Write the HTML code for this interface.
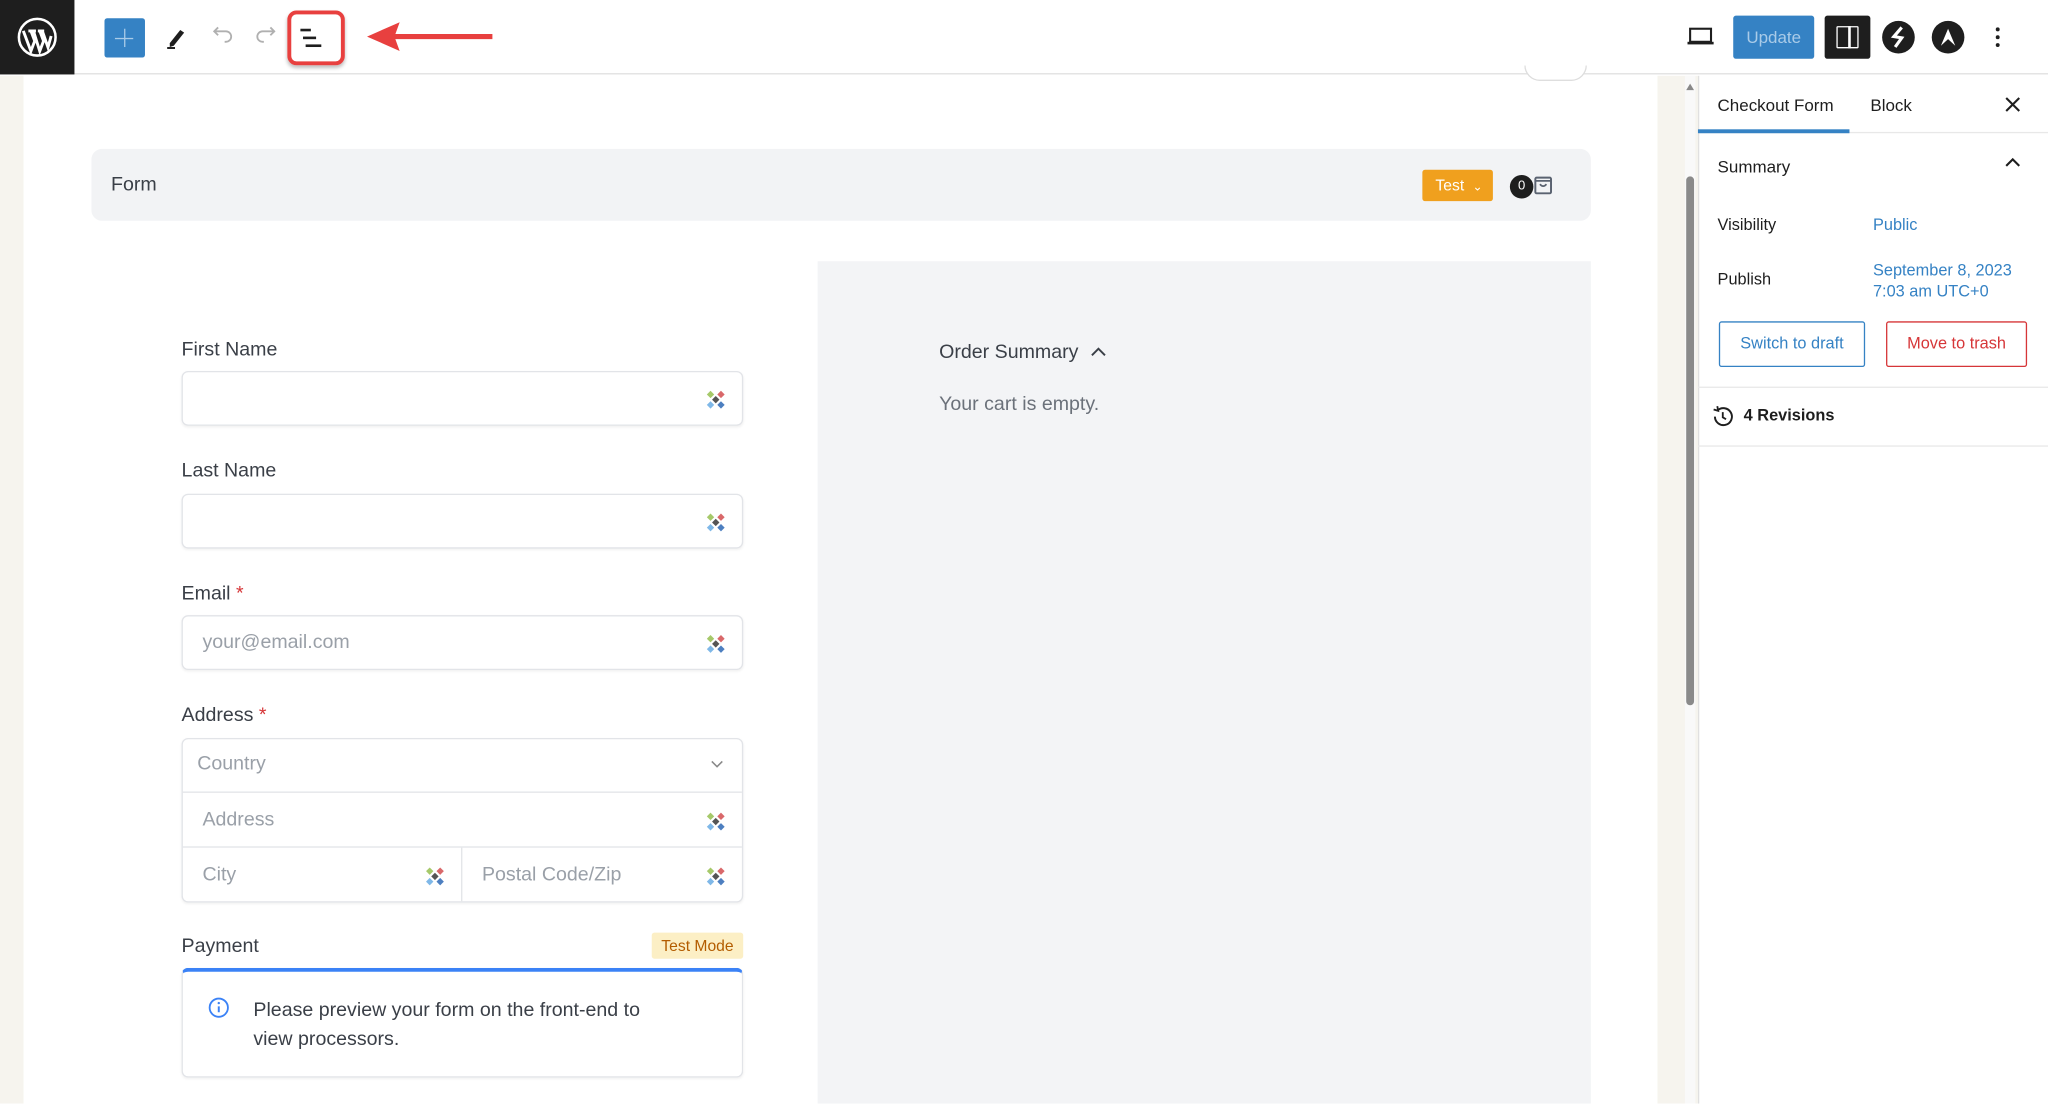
<!DOCTYPE html>
<html><head><meta charset="utf-8"><style>
*{box-sizing:border-box;margin:0;padding:0}
html,body{width:2048px;height:1104px;overflow:hidden;background:#fff;font-family:"Liberation Sans",sans-serif}
#w{position:absolute;left:0;top:0;width:1568px;height:845px;transform:scale(1.30612);transform-origin:0 0;background:#fff;overflow:hidden}
.a{position:absolute}
.lbl{position:absolute;left:139px;font-size:15px;color:#3a3f47}
.req{color:#d63638}
.inp{position:absolute;left:139px;width:430px;height:42px;border:1px solid #e2e4e8;border-radius:5px;background:#fff;box-shadow:0 1px 2px rgba(0,0,0,.06)}
.ph{position:absolute;font-size:15px;color:#9aa0a8}
.gem{position:absolute;width:16px;height:16px}
.gem i{position:absolute;width:4px;height:4px;transform:rotate(45deg)}
.sb{font-size:12.5px;color:#1e1e1e}
</style></head><body><div id="w">
<div class="a" style="left:0;top:0;width:1568px;height:57px;border-bottom:1px solid #e0e0e0;background:#fff"></div>
<div class="a" style="left:0;top:0;width:57px;height:57px;background:#1e1e1e"></div>
<svg class="a" style="left:13px;top:13px" width="31" height="31" viewBox="0 0 32 32"><circle cx="16" cy="16" r="14.5" fill="none" stroke="#fff" stroke-width="2"/><path d="M5 11 L11 27 L14 19 L11 11 M9 11h6 M13 11 L18 27 L21 19 L18 11 M16.5 11h5 M20 11 L24.5 24 L27 15" fill="none" stroke="#fff" stroke-width="2.3"/></svg>
<div class="a" style="left:80px;top:14px;width:31px;height:30px;background:#3582c4;border-radius:2px"></div>
<div class="a" style="left:95px;top:22px;width:1px;height:14px;background:#a9cbe8"></div>
<div class="a" style="left:88px;top:29px;width:14px;height:1px;background:#a9cbe8"></div>
<svg class="a" style="left:126px;top:19px" width="18" height="20" viewBox="0 0 18 20"><path d="M4 14 L12 4 L15 6 L7 16 L4 17Z" fill="#1e1e1e"/><rect x="2" y="17" width="6" height="1.5" fill="#1e1e1e"/></svg>
<svg class="a" style="left:160px;top:19px" width="20" height="18" viewBox="0 0 20 18"><path d="M5 5 H13 A4 4 0 0 1 13 13 H12 M7 2 L4 5 L7 8" fill="none" stroke="#b0b0b0" stroke-width="1.4"/></svg>
<svg class="a" style="left:194px;top:19px" width="20" height="18" viewBox="0 0 20 18"><path d="M15 5 H7 A4 4 0 0 0 7 13 H8 M13 2 L16 5 L13 8" fill="none" stroke="#b0b0b0" stroke-width="1.4"/></svg>
<div class="a" style="left:220px;top:8px;width:44px;height:42px;border:3px solid #e8403f;border-radius:7px;box-shadow:0 2px 3px rgba(0,0,0,.25)"></div>
<div class="a" style="left:230px;top:22px;width:8px;height:1.5px;background:#1e1e1e"></div>
<div class="a" style="left:232px;top:28px;width:10px;height:1.5px;background:#1e1e1e"></div>
<div class="a" style="left:234px;top:34px;width:12px;height:1.5px;background:#1e1e1e"></div>
<svg class="a" style="left:278px;top:14px" width="104" height="30" viewBox="0 0 104 30"><path d="M99 14 H22" stroke="#e8403f" stroke-width="4"/><path d="M3 14 L28 3 L24 14 L28 25Z" fill="#e8403f"/></svg>
<svg class="a" style="left:1291px;top:20px" width="22" height="16" viewBox="0 0 22 16"><rect x="3" y="2" width="16" height="10" fill="none" stroke="#1e1e1e" stroke-width="1.6"/><rect x="1" y="12" width="20" height="2" fill="#1e1e1e"/></svg>
<div class="a" style="left:1327px;top:12px;width:62px;height:33px;background:#3582c4;border-radius:2px;color:#a9cbe8;font-size:13px;line-height:33px;text-align:center">Update</div>
<div class="a" style="left:1397px;top:12px;width:35px;height:33px;background:#1e1e1e;border-radius:2px"></div>
<div class="a" style="left:1406px;top:20px;width:17px;height:17px;border:1.6px solid #fff;border-radius:1px"></div>
<div class="a" style="left:1415px;top:20px;width:1.6px;height:17px;background:#fff"></div>
<div class="a" style="left:1441px;top:16px;width:25px;height:25px;border-radius:50%;background:#1e1e1e"></div>
<svg class="a" style="left:1441px;top:16px" width="25" height="25" viewBox="0 0 25 25"><path d="M15 5 L9 12 L15 13 L10 20" fill="none" stroke="#fff" stroke-width="2.4"/></svg>
<div class="a" style="left:1479px;top:16px;width:25px;height:25px;border-radius:50%;background:#1e1e1e"></div>
<svg class="a" style="left:1479px;top:16px" width="25" height="25" viewBox="0 0 25 25"><path d="M7 19 L12.5 6 L18 19 L12.5 14Z" fill="#fff"/></svg>
<div class="a" style="left:1528px;top:21px;width:3px;height:3px;border-radius:50%;background:#1e1e1e;box-shadow:0 6px 0 #1e1e1e,0 12px 0 #1e1e1e"></div>
<div class="a" style="left:0;top:58px;width:18px;height:787px;background:#f6f4ee"></div>
<div class="a" style="left:1269px;top:58px;width:31px;height:787px;background:#f6f4ee"></div>
<div class="a" style="left:1290px;top:58px;width:8px;height:787px;background:#f9f9f9"></div>
<div class="a" style="left:1291px;top:64px;width:0;height:0;border-left:3px solid transparent;border-right:3px solid transparent;border-bottom:5px solid #888"></div>
<div class="a" style="left:1291px;top:135px;width:6px;height:405px;background:#8a8a8a;border-radius:3px"></div>
<div class="a" style="left:1167px;top:50px;width:48px;height:12px;border:1px solid #ddd;border-top:none;border-radius:0 0 12px 12px;background:#fff"></div>
<div class="a" style="left:70px;top:114px;width:1148px;height:55px;background:#f2f3f5;border-radius:8px"></div>
<div class="a" style="left:85px;top:133px;font-size:15px;color:#3a3f47">Form</div>
<div class="a" style="left:1089px;top:130px;width:54px;height:24px;background:#f0a01e;border-radius:2px;color:#fff;font-size:12px;line-height:24px;padding-left:10px">Test <span style="font-size:9px;margin-left:3px">&#8964;</span></div>
<div class="a" style="left:1156px;top:134px;width:18px;height:18px;border-radius:50%;background:#1e1e1e;color:#fff;font-size:10px;line-height:18px;text-align:center">0</div>
<svg class="a" style="left:1174px;top:133px" width="16" height="17" viewBox="0 0 16 17"><rect x="1.5" y="3" width="12" height="12" rx="1" fill="none" stroke="#5a6270" stroke-width="1.5"/><path d="M1.5 5.5h12 M5 8 Q7.5 11 10 8" fill="none" stroke="#5a6270" stroke-width="1.3"/></svg>
<div class="a" style="left:626px;top:200px;width:592px;height:645px;background:#f3f4f6"></div>
<div class="a" style="left:719px;top:261px;font-size:15px;color:#3a3f47">Order Summary <svg width="14" height="10" viewBox="0 0 14 10" style="margin-left:4px"><path d="M2 8 L7 3 L12 8" fill="none" stroke="#3a3f47" stroke-width="1.5"/></svg></div>
<div class="a" style="left:719px;top:301px;font-size:15px;color:#6b717a">Your cart is empty.</div>
<div class="lbl" style="top:259px">First Name</div>
<div class="inp" style="top:284px"></div>
<div class="lbl" style="top:352px">Last Name</div>
<div class="inp" style="top:378px"></div>
<div class="lbl" style="top:446px">Email <span class="req">*</span></div>
<div class="inp" style="top:471px"></div>
<div class="ph" style="left:155px;top:483px">your@email.com</div>
<div class="lbl" style="top:539px">Address <span class="req">*</span></div>
<div class="inp" style="top:565px;height:126px"></div>
<div class="a" style="left:140px;top:606px;width:428px;height:1px;background:#e2e4e8"></div>
<div class="a" style="left:140px;top:648px;width:428px;height:1px;background:#e2e4e8"></div>
<div class="a" style="left:353px;top:649px;width:1px;height:41px;background:#e2e4e8"></div>
<div class="ph" style="left:151px;top:576px">Country</div>
<svg class="a" style="left:543px;top:580px" width="12" height="10" viewBox="0 0 12 10"><path d="M2 3 L6 7 L10 3" fill="none" stroke="#888" stroke-width="1.2"/></svg>
<div class="ph" style="left:155px;top:619px">Address</div>
<div class="ph" style="left:155px;top:661px">City</div>
<div class="ph" style="left:369px;top:661px">Postal Code/Zip</div>
<div class="lbl" style="top:716px">Payment</div>
<div class="a" style="left:499px;top:714px;width:70px;height:20px;background:#fcefc5;color:#b35c00;font-size:12px;line-height:20px;text-align:center;border-radius:2px">Test Mode</div>
<div class="inp" style="top:741px;height:84px;border-top:3px solid #3b82f6"></div>
<svg class="a" style="left:159px;top:763px" width="17" height="17" viewBox="0 0 17 17"><circle cx="8.5" cy="8.5" r="7" fill="none" stroke="#3b82f6" stroke-width="1.4"/><path d="M8.5 7.5v4.5" stroke="#3b82f6" stroke-width="1.5"/><circle cx="8.5" cy="5" r="0.9" fill="#3b82f6"/></svg>
<div class="a" style="left:194px;top:763px;width:360px;font-size:15px;line-height:22px;color:#3a3f47">Please preview your form on the front-end to<br>view processors.</div>
<div id="gems"></div>
<div class="a" style="left:1300px;top:58px;width:268px;height:787px;background:#fff;border-left:1px solid #e0e0e0"></div>
<div class="a sb" style="left:1315px;top:73px;font-size:13px">Checkout Form</div>
<div class="a sb" style="left:1432px;top:73px;font-size:13px">Block</div>
<svg class="a" style="left:1535px;top:74px" width="12" height="12" viewBox="0 0 12 12"><path d="M1 1L11 11M11 1L1 11" stroke="#1e1e1e" stroke-width="1.6"/></svg>
<div class="a" style="left:1300px;top:101px;width:268px;height:1px;background:#e8e8e8"></div>
<div class="a" style="left:1300px;top:99px;width:116px;height:3px;background:#3582c4"></div>
<div class="a sb" style="left:1315px;top:120px;font-size:13px">Summary</div>
<svg class="a" style="left:1535px;top:120px" width="12" height="9" viewBox="0 0 12 9"><path d="M1 7L6 2L11 7" fill="none" stroke="#1e1e1e" stroke-width="1.6"/></svg>
<div class="a sb" style="left:1315px;top:165px">Visibility</div>
<div class="a" style="left:1434px;top:165px;font-size:12.5px;color:#3582c4">Public</div>
<div class="a sb" style="left:1315px;top:207px">Publish</div>
<div class="a" style="left:1434px;top:199px;font-size:12.5px;line-height:16px;color:#3582c4">September 8, 2023<br>7:03 am UTC+0</div>
<div class="a" style="left:1316px;top:246px;width:112px;height:35px;border:1px solid #3582c4;border-radius:2px;color:#3582c4;font-size:12.5px;line-height:33px;text-align:center">Switch to draft</div>
<div class="a" style="left:1444px;top:246px;width:108px;height:35px;border:1px solid #d63638;border-radius:2px;color:#d63638;font-size:12.5px;line-height:33px;text-align:center">Move to trash</div>
<div class="a" style="left:1300px;top:296px;width:268px;height:1px;background:#e8e8e8"></div>
<svg class="a" style="left:1310px;top:310px" width="18" height="18" viewBox="0 0 18 18"><path d="M3 9 A6.5 6.5 0 1 0 5 4.3" fill="none" stroke="#1e1e1e" stroke-width="1.5"/><path d="M2 3.5 L5.5 4.5 L4.8 1" fill="none" stroke="#1e1e1e" stroke-width="1.4"/><path d="M9 5.5V9.5L11.5 11" fill="none" stroke="#1e1e1e" stroke-width="1.4"/></svg>
<div class="a sb" style="left:1335px;top:311px;font-weight:bold;font-size:12.5px">4 Revisions</div>
<div class="a" style="left:1300px;top:341px;width:268px;height:1px;background:#e8e8e8"></div>
</div>
<script>
var p=[[540,298],[540,392],[540,485],[540,621],[540,663],[325,663]],h='';
p.forEach(function(q){h+='<div class="gem" style="left:'+q[0]+'px;top:'+q[1]+'px"><i style="left:2px;top:2px;background:#a6c96a"></i><i style="left:10px;top:2px;background:#d9686a"></i><i style="left:6px;top:6px;background:#555"></i><i style="left:2px;top:10px;background:#7fb8e8"></i><i style="left:10px;top:10px;background:#4d7fc0"></i></div>'});
document.getElementById('gems').innerHTML=h;
</script>
</body></html>
